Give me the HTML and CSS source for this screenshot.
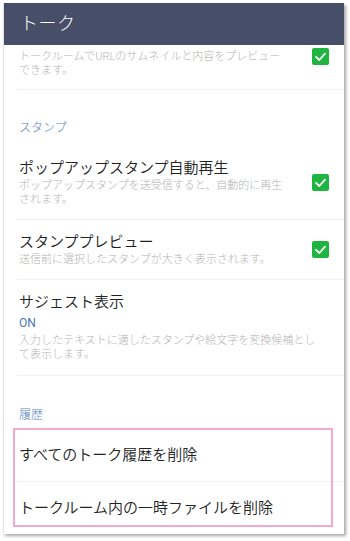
FILE: index.html
```html
<!DOCTYPE html>
<html lang="ja">
<head>
<meta charset="utf-8">
<link rel="stylesheet" href="styles.css">
</head>
<body>
<div class="screen">
  <header class="appbar">トーク</header>
  <div class="list">
    <div class="row row-partial">
      <div class="text">
        <div class="desc">トークルームでURLのサムネイルと内容をプレビュー<br>できます。</div>
      </div>
      <span class="check check-top"><svg viewBox="0 0 17 17" width="17" height="17"><polyline points="4,8.8 7.3,12 13,5.6" fill="none" stroke="#fff" stroke-width="1.8" stroke-linecap="round" stroke-linejoin="round"/></svg></span>
    </div>
    <div class="section first-section">スタンプ</div>
    <div class="row">
      <div class="text">
        <div class="title">ポップアップスタンプ自動再生</div>
        <div class="desc">ポップアップスタンプを送受信すると、自動的に再生<br>されます。</div>
      </div>
      <span class="check"><svg viewBox="0 0 17 17" width="17" height="17"><polyline points="4,8.8 7.3,12 13,5.6" fill="none" stroke="#fff" stroke-width="1.8" stroke-linecap="round" stroke-linejoin="round"/></svg></span>
    </div>
    <div class="row">
      <div class="text">
        <div class="title">スタンププレビュー</div>
        <div class="desc">送信前に選択したスタンプが大きく表示されます。</div>
      </div>
      <span class="check"><svg viewBox="0 0 17 17" width="17" height="17"><polyline points="4,8.8 7.3,12 13,5.6" fill="none" stroke="#fff" stroke-width="1.8" stroke-linecap="round" stroke-linejoin="round"/></svg></span>
    </div>
    <div class="row row-suggest">
      <div class="text">
        <div class="title">サジェスト表示</div>
        <div class="value">ON</div>
        <div class="desc">入力したテキストに適したスタンプや絵文字を変換候補とし<br>て表示します。</div>
      </div>
    </div>
    <div class="section second-section">履歴</div>
    <div class="row row-single first-single">
      <div class="text"><div class="title">すべてのトーク履歴を削除</div></div>
    </div>
    <div class="row row-single last-single">
      <div class="text"><div class="title">トークルーム内の一時ファイルを削除</div></div>
    </div>
  </div>
  <div class="highlight"></div>
</div>
</body>
</html>
```

FILE: styles.css
```css
html, body {
  margin: 0;
  padding: 0;
  background: #ffffff;
}
body {
  width: 350px;
  height: 541px;
  overflow: hidden;
  font-family: "Roboto", "Noto Sans CJK JP", sans-serif;
}
.screen {
  position: relative;
  margin: 3px 0 0 3px;
  width: 341px;
  height: 531px;
  background: #ffffff;
  overflow: hidden;
  box-shadow: 2px 2px 3px rgba(0, 0, 0, 0.35);
  border-left: 1px solid #e2e2e2;
  box-sizing: border-box;
}
.appbar {
  height: 42px;
  background: #474e67;
  color: #ffffff;
  font-size: 18px;
  font-weight: 300;
  line-height: 42px;
  padding-left: 16px;
  letter-spacing: 0.5px;
}
.list {
  display: flex;
  flex-direction: column;
}
.row {
  display: flex;
  align-items: center;
  margin-left: 13px;
  padding: 12px 15px 12px 2px;
  border-bottom: 1px solid #f1f1f1;
}
.text {
  flex: 1;
  min-width: 0;
}
.title {
  font-size: 15px;
  font-weight: 350;
  line-height: 20px;
  color: #222222;
}
.desc {
  font-size: 11px;
  font-weight: 300;
  line-height: 14px;
  color: #b4b4b4;
  margin-top: 1px;
}
.value {
  font-size: 12px;
  line-height: 20px;
  margin-top: 1px;
  color: #4a76b8;
}
.row-partial {
  align-items: flex-start;
  padding-top: 5px;
  padding-bottom: 11px;
}
.row-partial .desc {
  margin-top: 0;
}
.check {
  flex: none;
  width: 17px;
  height: 17px;
  background: #1fb43f;
  border-radius: 2px;
  display: flex;
}
.check-top {
  margin-top: -2px;
}
.row-suggest {
  padding-bottom: 13px;
}
.section {
  margin-left: 13px;
  padding-left: 2px;
  font-size: 12px;
  font-weight: 300;
  line-height: 16px;
  color: #5a7fbd;
}
.first-section {
  padding-top: 30px;
  padding-bottom: 10px;
}
.second-section {
  padding-top: 31px;
  padding-bottom: 10px;
}
.first-single {
  padding-top: 12px;
  padding-bottom: 16px;
}
.last-single {
  padding-top: 16px;
  padding-bottom: 16px;
  border-bottom: none;
}
.highlight {
  position: absolute;
  left: 9px;
  top: 425px;
  width: 320px;
  height: 99px;
  box-sizing: border-box;
  border: 2px solid #f7a9c9;
  pointer-events: none;
}
```
